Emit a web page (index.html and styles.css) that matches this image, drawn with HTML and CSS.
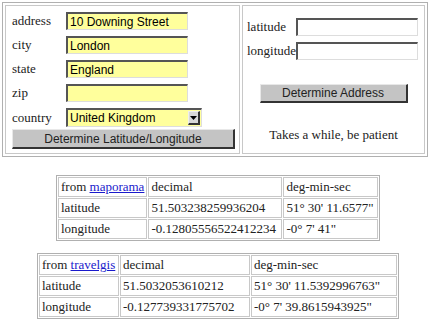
FILE: index.html
```html
<!DOCTYPE html>
<html lang="en">
<head>
    <meta charset="UTF-8">
    <title>Geocoder</title>
    <link rel="stylesheet" href="styles.css">
</head>
<body>
    <table class="forms">
        <tr>
            <td class="form-cell">
                <table class="fields">
                    <tr><td class="label">address</td><td><input class="yellow" type="text" value="10 Downing Street"></td></tr>
                    <tr><td class="label">city</td><td><input class="yellow" type="text" value="London"></td></tr>
                    <tr><td class="label">state</td><td><input class="yellow" type="text" value="England"></td></tr>
                    <tr><td class="label">zip</td><td><input class="yellow" type="text" value=""></td></tr>
                    <tr>
                        <td class="label">country</td>
                        <td>
                            <div class="select">
                                <span class="select-value">United Kingdom</span>
                                <span class="select-arrow">
                                    <svg width="7" height="4" viewBox="0 0 7 4"><path d="M0 0h7L3.5 4z" fill="#000"/></svg>
                                </span>
                            </div>
                        </td>
                    </tr>
                </table>
                <button class="btn btn-wide">Determine Latitude/Longitude</button>
            </td>
            <td class="form-cell right">
                <table class="fields">
                    <tr><td class="label short">latitude</td><td><input class="plain" type="text"></td></tr>
                    <tr><td class="label short">longitude</td><td><input class="plain" type="text"></td></tr>
                </table>
                <div class="center">
                    <button class="btn btn-addr">Determine Address</button>
                    <p class="note">Takes a while, be patient</p>
                </div>
            </td>
        </tr>
    </table>

    <table class="results first">
        <tr><td>from <a href="#">maporama</a></td><td>decimal</td><td>deg-min-sec</td></tr>
        <tr><td>latitude</td><td>51.503238259936204</td><td>51° 30' 11.6577"</td></tr>
        <tr><td>longitude</td><td>-0.12805556522412234</td><td>-0° 7' 41"</td></tr>
    </table>

    <table class="results second">
        <tr><td>from <a href="#">travelgis</a></td><td>decimal</td><td>deg-min-sec</td></tr>
        <tr><td>latitude</td><td>51.5032053610212</td><td>51° 30' 11.5392996763"</td></tr>
        <tr><td>longitude</td><td>-0.127739331775702</td><td>-0° 7' 39.8615943925"</td></tr>
    </table>
</body>
</html>
```
FILE: styles.css
```css
body {
    margin: 0;
    padding: 2px;
    font-family: "Liberation Serif", "Times New Roman", serif;
    font-size: 13px;
    color: #222;
    background: #fff;
}

table {
    border-collapse: separate;
}

.forms {
    width: 426px;
    border: 1px solid #b0b0b0;
    border-spacing: 2px;
}

.form-cell {
    border: 1px solid #c8c8c8;
    vertical-align: top;
    padding: 6px 4px 4px 6px;
}

.form-cell.right {
    width: 174px;
    padding: 12px 4px 4px 4px;
}

.fields {
    border-spacing: 0;
}

.fields td {
    padding: 0 0 6px 0;
}

.label {
    width: 54px;
    height: 18px;
}

.label.short {
    width: 48px;
}

input {
    display: block;
    width: 122px;
    height: 18px;
    box-sizing: border-box;
    margin: 0;
    padding: 0 2px;
    font-family: "Liberation Sans", Arial, sans-serif;
    font-size: 12px;
    color: #000;
    border-style: solid;
    border-width: 2px 1px 1px 2px;
    border-color: #555 #ddd #ddd #555;
}

.yellow {
    background: #ffff9c;
}

.plain {
    background: #fff;
}

.select {
    display: flex;
    align-items: center;
    justify-content: space-between;
    width: 136px;
    height: 19px;
    box-sizing: border-box;
    background: #ffff9c;
    border-style: solid;
    border-width: 2px 1px 1px 2px;
    border-color: #555 #ddd #ddd #555;
    padding-left: 2px;
    font-family: "Liberation Sans", Arial, sans-serif;
    font-size: 12px;
    color: #000;
}

.select-arrow {
    display: flex;
    align-items: center;
    justify-content: center;
    width: 12px;
    height: 14px;
    margin-right: 1px;
    background: #d8d8d8;
    border-style: solid;
    border-width: 1px 2px 2px 1px;
    border-color: #eee #333 #333 #eee;
    box-sizing: border-box;
}

.btn {
    display: block;
    height: 20px;
    box-sizing: border-box;
    padding: 0;
    background: #c4c4c4;
    font-family: "Liberation Sans", Arial, sans-serif;
    font-size: 12px;
    color: #222;
    border-style: solid;
    border-width: 1px 2px 2px 1px;
    border-color: #e8e8e8 #333 #333 #e8e8e8;
}

.btn-wide {
    width: 223px;
    margin-top: -4px;
}

.center {
    text-align: center;
}

.btn-addr {
    width: 148px;
    height: 19px;
    margin: 18px auto 0;
}

.note {
    margin: 24px 0 0;
}

.results {
    border: 1px solid #b0b0b0;
    border-spacing: 1px;
}

.results td {
    border: 1px solid #c8c8c8;
    padding: 1px 2px;
    height: 16px;
    line-height: 16px;
    white-space: nowrap;
}

.results a {
    color: #1a1acc;
}

.first {
    margin: 18px 0 0 54px;
}

.first td:nth-child(1) { width: 80px; }
.first td:nth-child(2) { width: 128px; }
.first td:nth-child(3) { width: 89px; }

.second {
    margin: 12px 0 0 35px;
}

.second td:nth-child(1) { width: 74px; }
.second td:nth-child(2) { width: 124px; }
.second td:nth-child(3) { width: 140px; }
```
